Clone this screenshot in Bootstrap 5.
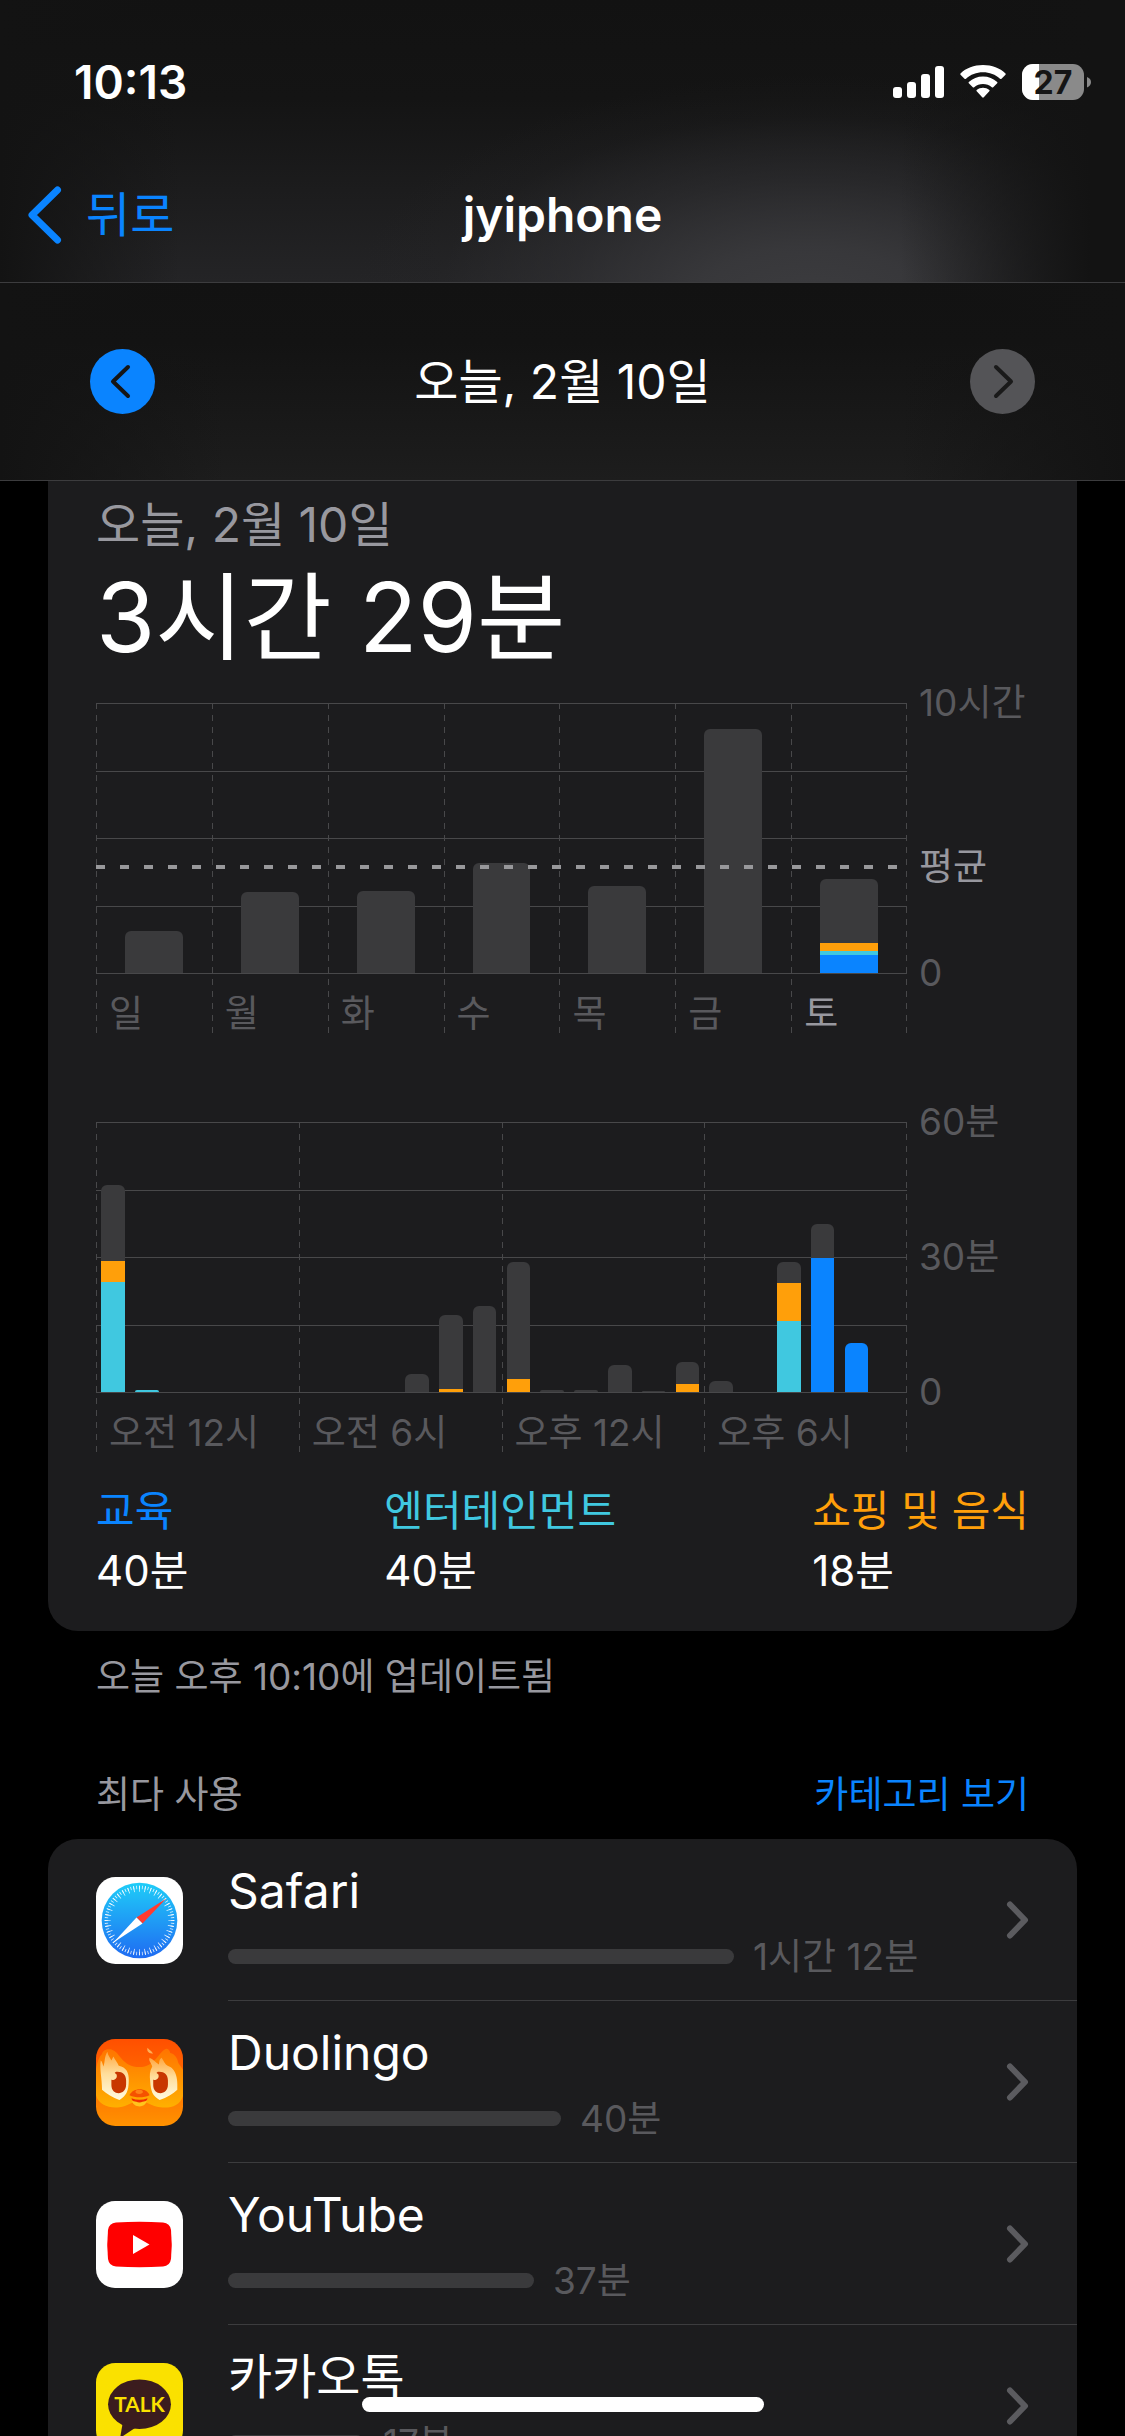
<!DOCTYPE html>
<html lang="ko" data-bs-theme="dark">
<head>
<meta charset="utf-8">
<meta name="viewport" content="width=device-width, initial-scale=1">
<title>스크린 타임</title>
<link href="https://cdn.jsdelivr.net/npm/bootstrap@5.3.0/dist/css/bootstrap.min.css" rel="stylesheet">
<style>
:root{--ios-blue:#0a84ff;--ios-teal:#40c8e0;--ios-orange:#ff9f0a;--surface:#1c1c1e;--fill:#3a3a3c;--line:#48484a;--dim:#59595d;--muted:#98989f}
body{background:#000;color:#fff;font-family:Inter,"Noto Sans CJK KR",sans-serif;font-size:48px;line-height:56px}
a,button{text-decoration:none}
.top-nav{background:
  linear-gradient(90deg,#131313 0,transparent 16%,transparent 80%,rgba(19,19,19,.6) 90%,#131313 97%),
  radial-gradient(ellipse 460px 230px at 72% 108%,#3c3c3f 0,rgba(58,58,61,.9) 25%,rgba(50,50,53,.55) 55%,rgba(40,40,42,.15) 82%,rgba(36,36,38,0) 100%),
  linear-gradient(#121212 0,#141414 35%,#242426 100%);border-bottom:1px solid #3c3c3e}
.status-row{height:148px;padding:16px 34px 0 74px}
.clock{font-size:46px;font-weight:600}
.battery-text{font:700 32px Inter,sans-serif}
.title-row{height:134px;padding:0 28px}
.side-slot{flex:1 1 0}
.screen-title{font-size:48px;font-weight:600}
.back-link,.accent-link{color:var(--ios-blue)}
.day-nav{height:198px;padding:0 90px;background:linear-gradient(90deg,#131313 0,transparent 20%,transparent 80%,#131313 100%),linear-gradient(#121212 0,#131313 30%,#1d1d1d 100%);border-bottom:1px solid #3c3c3e}
.round-btn{width:65px;height:65px;border:0;background:var(--ios-blue)}
.round-btn:disabled{background:#545457}
.page-pad{padding-left:48px;padding-right:48px}
.panel{background:var(--surface);border-radius:30px}
.panel-open{border-top-left-radius:0;border-top-right-radius:0;padding:16px 48px 30px}
.sub-label{color:var(--muted)}
.total-time{font-size:96px;line-height:128px;margin-bottom:22px}
.chart-area{height:330px}
.chart-area::after,.tick-col::before{content:"";position:absolute;top:0;bottom:0;left:0;width:1px;background:repeating-linear-gradient(var(--line) 0 6px,transparent 6px 12px)}
.chart-area::after{left:auto;right:0}
.gridlines{height:271px}
.gridlines span{height:1px;background:var(--line)}
.tick-col{flex:1 1 0;position:relative}
.plot{height:270px}
.tick-label{height:60px;padding:21px 0 0 13px;font-size:37px;line-height:40px;color:var(--dim);white-space:nowrap}
.tick-label.today{color:var(--muted)}
.stack-bar{height:100%;width:50%}
.hour .stack-bar{width:70%}
.hour{flex:1 1 0}
.seg{background:var(--fill)}
.seg:first-child{border-radius:6px 6px 0 0}
.seg.edu{background:var(--ios-blue)}
.seg.ent{background:var(--ios-teal)}
.seg.shop{background:var(--ios-orange)}
.avg-line{height:4px;background:repeating-linear-gradient(90deg,#98989b 0 9px,transparent 9px 24px);transform:translateY(-50%)}
.y-axis{width:122px;height:270px}
.y-axis span{left:12px;font-size:37px;line-height:40px;color:var(--dim);transform:translateY(-50%);white-space:nowrap}
.y-axis span.avg{color:var(--muted)}
.chart-gap{margin-top:89px}
.legend-row{margin-top:29px;font-size:42px;line-height:60px}
.c-edu{color:var(--ios-blue)}.c-ent{color:var(--ios-teal)}.c-shop{color:var(--ios-orange)}
.note-row{padding:18px 48px 0;font-size:37px;color:var(--muted)}
.section-row{padding:62px 48px 16px;font-size:37px}
.section-title{font-size:37px;line-height:56px}
.app-row{height:162px;padding-left:48px;color:#fff}
.app-icon{width:87px;height:87px;margin-right:45px}
.app-body{border-bottom:1px solid #3c3c3e;padding-right:48px}
.app-name{line-height:60px;margin-bottom:14px}
.use-row{line-height:44px;font-size:37px;color:var(--dim);gap:19px}
.use-bar{height:15px;border-radius:8px;background:var(--fill)}
.home-bar{bottom:24px;width:402px;height:15px;border-radius:8px;background:#fff}
</style>
<script src="https://cdn.jsdelivr.net/npm/bootstrap@5.3.0/dist/js/bootstrap.bundle.min.js"></script>
</head>
<body class="vh-100 overflow-hidden">
<header>
  <div class="top-nav">
    <div class="status-row d-flex align-items-center justify-content-between">
      <span class="clock">10:13</span>
      <svg width="198" height="36" viewBox="0 0 198 36" fill="#fff" role="img" aria-label="신호, Wi-Fi, 배터리 27%">
        <rect x="0" y="23" width="9" height="11" rx="3"/><rect x="14" y="18" width="9" height="16" rx="3"/><rect x="28" y="10" width="9" height="24" rx="3"/><rect x="42" y="2" width="9" height="32" rx="3"/>
        <path d="M90 1C81 1 73 4 67.500 9.500Q67 10 67.500 10.700L71.500 14.700Q72.200 15.300 73 14.700C77.500 10.500 83.500 8.300 90 8.300S102.500 10.500 107 14.700Q107.800 15.300 108.500 14.700L112.500 10.700Q113 10 112.500 9.500C107 4 99 1 90 1ZM90 12.500C84.500 12.500 79.700 14.500 75.800 18Q75.200 18.700 75.800 19.300L79.800 23.200Q80.500 23.800 81.200 23.200C83.700 21 86.700 20 90 20S96.300 21 98.800 23.200Q99.500 23.800 100.200 23.200L104.200 19.300Q104.800 18.700 104.200 18C100.300 14.500 95.500 12.500 90 12.500ZM90 23.800C87.700 23.800 85.500 24.600 83.700 26Q83 26.600 83.700 27.300L89.200 33.300Q90 34 90.800 33.300L96.300 27.300Q97 26.600 96.300 26C94.500 24.600 92.300 23.800 90 23.800Z"/>
        <clipPath id="cell"><rect x="129" y="0" width="62" height="36" rx="11"/></clipPath>
        <g clip-path="url(#cell)"><rect x="129" width="62" height="36" fill="#8a8a8a"/><rect x="129" width="17" height="36"/></g>
        <path d="M194 13Q198 14.500 198 18T194 23.500Z" fill="#8a8a8a"/>
        <text x="160" y="30" text-anchor="middle" fill="#151515" class="battery-text">27</text>
      </svg>
    </div>
    <nav class="title-row d-flex align-items-center">
      <div class="side-slot d-flex"><a href="#" class="back-link d-flex align-items-center gap-4">
        <svg width="34" height="58" viewBox="0 0 34 58" fill="none" stroke="currentColor" stroke-width="7" stroke-linecap="round" stroke-linejoin="round" aria-hidden="true"><path d="M29.500 4L4 29L29.500 54"/></svg><span>뒤로</span></a></div>
      <h1 class="screen-title m-0">jyiphone</h1>
      <div class="side-slot"></div>
    </nav>
  </div>
  <div class="day-nav d-flex align-items-center justify-content-between">
    <button type="button" class="round-btn rounded-circle p-0 d-flex align-items-center justify-content-center" aria-label="이전 날">
      <svg width="65" height="65" viewBox="0 0 65 65" fill="none" stroke="#151515" stroke-width="4" stroke-linecap="round" stroke-linejoin="round"><path d="M38 18L23 32.500L38 47"/></svg></button>
    <span>오늘, 2월 10일</span>
    <button type="button" disabled class="round-btn rounded-circle p-0 d-flex align-items-center justify-content-center" aria-label="다음 날">
      <svg width="65" height="65" viewBox="0 0 65 65" fill="none" stroke="#1a1a1a" stroke-width="4" stroke-linecap="round" stroke-linejoin="round"><path d="M26 18L41 32.500L26 47"/></svg></button>
  </div>
</header>

<main class="page-pad">
  <section class="panel panel-open">
    <div class="sub-label">오늘, 2월 10일</div>
    <div class="total-time">3시간 29분</div>

    <div class="d-flex">
      <div class="chart-area position-relative d-flex flex-grow-1">
        <div class="gridlines position-absolute top-0 start-0 end-0 d-flex flex-column justify-content-between"><span></span><span></span><span></span><span></span><span></span></div>
        <div class="tick-col"><div class="plot"><div class="stack-bar d-flex flex-column justify-content-end mx-auto"><div class="seg" style="height:15.6%"></div></div></div><div class="tick-label">일</div></div>
        <div class="tick-col"><div class="plot"><div class="stack-bar d-flex flex-column justify-content-end mx-auto"><div class="seg" style="height:30%"></div></div></div><div class="tick-label">월</div></div>
        <div class="tick-col"><div class="plot"><div class="stack-bar d-flex flex-column justify-content-end mx-auto"><div class="seg" style="height:30.4%"></div></div></div><div class="tick-label">화</div></div>
        <div class="tick-col"><div class="plot"><div class="stack-bar d-flex flex-column justify-content-end mx-auto"><div class="seg" style="height:40.8%"></div></div></div><div class="tick-label">수</div></div>
        <div class="tick-col"><div class="plot"><div class="stack-bar d-flex flex-column justify-content-end mx-auto"><div class="seg" style="height:32.2%"></div></div></div><div class="tick-label">목</div></div>
        <div class="tick-col"><div class="plot"><div class="stack-bar d-flex flex-column justify-content-end mx-auto"><div class="seg" style="height:90.4%"></div></div></div><div class="tick-label">금</div></div>
        <div class="tick-col"><div class="plot"><div class="stack-bar d-flex flex-column justify-content-end mx-auto"><div class="seg" style="height:23.7%"></div><div class="seg shop" style="height:3%"></div><div class="seg ent" style="height:1.5%"></div><div class="seg edu" style="height:6.7%"></div></div></div><div class="tick-label today">토</div></div>
        <div class="plot position-absolute top-0 start-0 end-0"><div class="avg-line position-absolute start-0 end-0" style="top:60.9%"></div></div>
      </div>
      <div class="y-axis position-relative"><span class="position-absolute" style="top:0%">10시간</span><span class="position-absolute avg" style="top:60.9%">평균</span><span class="position-absolute" style="top:100%">0</span></div>
    </div>

    <div class="d-flex chart-gap">
      <div class="chart-area position-relative d-flex flex-grow-1">
        <div class="gridlines position-absolute top-0 start-0 end-0 d-flex flex-column justify-content-between"><span></span><span></span><span></span><span></span><span></span></div>
        <div class="tick-col"><div class="plot d-flex">
          <div class="hour"><div class="stack-bar d-flex flex-column justify-content-end mx-auto"><div class="seg" style="height:28.1%"></div><div class="seg shop" style="height:7.8%"></div><div class="seg ent" style="height:40.8%"></div></div></div>
          <div class="hour"><div class="stack-bar d-flex flex-column justify-content-end mx-auto"><div class="seg ent" style="height:.8%"></div></div></div>
          <div class="hour"></div><div class="hour"></div><div class="hour"></div><div class="hour"></div>
        </div><div class="tick-label">오전 12시</div></div>
        <div class="tick-col"><div class="plot d-flex">
          <div class="hour"></div><div class="hour"></div><div class="hour"></div>
          <div class="hour"><div class="stack-bar d-flex flex-column justify-content-end mx-auto"><div class="seg" style="height:6.7%"></div></div></div>
          <div class="hour"><div class="stack-bar d-flex flex-column justify-content-end mx-auto"><div class="seg" style="height:27.4%"></div><div class="seg shop" style="height:1.2%"></div></div></div>
          <div class="hour"><div class="stack-bar d-flex flex-column justify-content-end mx-auto"><div class="seg" style="height:31.9%"></div></div></div>
        </div><div class="tick-label">오전 6시</div></div>
        <div class="tick-col"><div class="plot d-flex">
          <div class="hour"><div class="stack-bar d-flex flex-column justify-content-end mx-auto"><div class="seg" style="height:43.3%"></div><div class="seg shop" style="height:4.9%"></div></div></div>
          <div class="hour"><div class="stack-bar d-flex flex-column justify-content-end mx-auto"><div class="seg" style="height:.8%"></div></div></div>
          <div class="hour"><div class="stack-bar d-flex flex-column justify-content-end mx-auto"><div class="seg" style="height:.8%"></div></div></div>
          <div class="hour"><div class="stack-bar d-flex flex-column justify-content-end mx-auto"><div class="seg" style="height:10%"></div></div></div>
          <div class="hour"><div class="stack-bar d-flex flex-column justify-content-end mx-auto"><div class="seg" style="height:.4%"></div></div></div>
          <div class="hour"><div class="stack-bar d-flex flex-column justify-content-end mx-auto"><div class="seg" style="height:8.1%"></div><div class="seg shop" style="height:3%"></div></div></div>
        </div><div class="tick-label">오후 12시</div></div>
        <div class="tick-col"><div class="plot d-flex">
          <div class="hour"><div class="stack-bar d-flex flex-column justify-content-end mx-auto"><div class="seg" style="height:4.1%"></div></div></div>
          <div class="hour"></div>
          <div class="hour"><div class="stack-bar d-flex flex-column justify-content-end mx-auto"><div class="seg" style="height:7.8%"></div><div class="seg shop" style="height:14.1%"></div><div class="seg ent" style="height:26.3%"></div></div></div>
          <div class="hour"><div class="stack-bar d-flex flex-column justify-content-end mx-auto"><div class="seg" style="height:12.6%"></div><div class="seg edu" style="height:49.8%"></div></div></div>
          <div class="hour"><div class="stack-bar d-flex flex-column justify-content-end mx-auto"><div class="seg edu" style="height:18.2%"></div></div></div>
          <div class="hour"></div>
        </div><div class="tick-label">오후 6시</div></div>
      </div>
      <div class="y-axis position-relative"><span class="position-absolute" style="top:0%">60분</span><span class="position-absolute" style="top:50%">30분</span><span class="position-absolute" style="top:100%">0</span></div>
    </div>

    <div class="legend-row d-flex justify-content-between">
      <div><div class="c-edu">교육</div><div>40분</div></div>
      <div><div class="c-ent">엔터테인먼트</div><div>40분</div></div>
      <div><div class="c-shop">쇼핑 및 음식</div><div>18분</div></div>
    </div>
  </section>

  <p class="note-row m-0">오늘 오후 10:10에 업데이트됨</p>
  <div class="section-row d-flex justify-content-between">
    <h2 class="section-title sub-label m-0 fw-normal">최다 사용</h2>
    <a href="#" class="accent-link">카테고리 보기</a>
  </div>

  <section class="panel">
    <a href="#" class="app-row d-flex align-items-center">
      <svg class="app-icon flex-shrink-0" viewBox="0 0 260 260" aria-hidden="true">
        <defs><linearGradient id="sky" x2="0" y2="1"><stop stop-color="#1fcdf8"/><stop offset="1" stop-color="#1f6bf2"/></linearGradient></defs>
        <rect width="260" height="260" rx="58" fill="#fff"/><circle cx="130" cy="130" r="113" fill="url(#sky)"/>
        <g fill="none" stroke="#fff" stroke-opacity=".85"><circle cx="130" cy="130" r="99" stroke-width="10" pathLength="72" stroke-dasharray=".28 .72" stroke-dashoffset=".14"/><circle cx="130" cy="130" r="95" stroke-width="18" pathLength="36" stroke-dasharray=".15 .85" stroke-dashoffset=".075"/></g>
        <path d="M210 64L121 121L139 139Z" fill="#ff3b30"/><path d="M52 196L121 121L139 139Z" fill="#fff"/>
      </svg>
      <div class="app-body flex-grow-1 h-100 d-flex align-items-center">
        <div class="flex-grow-1"><div class="app-name">Safari</div><div class="use-row d-flex align-items-center"><div class="use-bar" style="width:506px"></div><span>1시간 12분</span></div></div>
        <svg width="24" height="40" viewBox="0 0 24 40" fill="none" stroke="#5b5b5f" stroke-width="6" stroke-linecap="round" stroke-linejoin="round"><path d="M5 4.500L20 20L5 35.500"/></svg>
      </div>
    </a>
    <a href="#" class="app-row d-flex align-items-center">
      <svg class="app-icon flex-shrink-0" viewBox="0 0 260 260" aria-hidden="true">
        <defs>
          <linearGradient id="ember" x2="0" y2="1"><stop stop-color="#ff4f00"/><stop offset=".35" stop-color="#ff6400"/><stop offset="1" stop-color="#ff9200"/></linearGradient>
          <linearGradient id="face" x2="0" y2="1"><stop stop-color="#ff7400"/><stop offset="1" stop-color="#ffb000"/></linearGradient>
          <linearGradient id="flame" x2="0" y2="1"><stop stop-color="#ffa640"/><stop offset=".45" stop-color="#ffdd9a"/><stop offset="1" stop-color="#fffbe0"/></linearGradient>
          <clipPath id="tile"><rect width="260" height="260" rx="58"/></clipPath>
        </defs>
        <g clip-path="url(#tile)">
          <rect width="260" height="260" fill="url(#ember)"/>
          <path d="M0 90C4 70 8 55 18 45C20 35 32 28 48 32C72 40 78 84 130 84C176 84 186 40 208 30C215 26 220 34 222 42C236 44 244 60 246 72L260 92V170C250 200 222 208 192 204C165 202 155 186 130 186S95 202 70 204C38 208 8 196 0 168Z" fill="url(#face)"/>
          <path d="M18 152C18 120 10 86 14 64C18 66 20 74 22 82C28 68 24 54 34 38C36 50 42 56 46 64L52 52C56 62 64 68 68 80C90 84 99 100 98 124C97 156 92 168 70 182C50 176 32 164 18 152Z" fill="url(#flame)"/>
          <path d="M243 152C246 104 232 86 214 80C206 76 204 68 196 56C188 62 190 68 188 76C178 70 170 60 160 56C156 66 166 72 168 82C160 96 160 110 162 126C164 156 168 168 190 182C212 176 230 164 243 152Z" fill="url(#flame)"/>
          <path d="M154 26C152 34 154 38 160 42L170 44C168 36 160 34 154 26Z" fill="#ffad55"/>
          <g fill="#c83700"><path d="M60 98C78 96 90 106 90 124V136C90 170 46 170 46 138V122C54 124 64 118 62 108C62 104 56 104 56 101Z"/><path d="M185 98C203 96 215 106 215 124V136C215 170 171 170 171 138V122C179 124 189 118 187 108C187 104 181 104 181 101Z"/></g>
          <path d="M108 186C112 206 148 208 152 184Z" fill="#ffc51c"/>
          <path d="M100 168C110 144 152 144 160 168C142 176 118 176 100 168Z" fill="#f55200"/><ellipse cx="129" cy="158" rx="11" ry="6" fill="#ff8217"/>
          <path d="M106 177Q130 186 154 177C152 188 144 186 130 190C116 186 108 188 106 177Z" fill="#f02f00"/>
        </g>
      </svg>
      <div class="app-body flex-grow-1 h-100 d-flex align-items-center">
        <div class="flex-grow-1"><div class="app-name">Duolingo</div><div class="use-row d-flex align-items-center"><div class="use-bar" style="width:333px"></div><span>40분</span></div></div>
        <svg width="24" height="40" viewBox="0 0 24 40" fill="none" stroke="#5b5b5f" stroke-width="6" stroke-linecap="round" stroke-linejoin="round"><path d="M5 4.500L20 20L5 35.500"/></svg>
      </div>
    </a>
    <a href="#" class="app-row d-flex align-items-center">
      <svg class="app-icon flex-shrink-0" viewBox="0 0 87 87" aria-hidden="true">
        <rect width="87" height="87" rx="19" fill="#fff"/><path d="M20 21.500Q43.500 20 67 21.500Q74 22 75 29Q76.500 43.500 75 58Q74 65 67 65.500Q43.500 67 20 65.500Q13 65 12 58Q10.500 43.500 12 29Q13 22 20 21.500Z" fill="red"/><path d="M37 34V53L53.500 43.500Z" fill="#fff"/>
      </svg>
      <div class="app-body flex-grow-1 h-100 d-flex align-items-center">
        <div class="flex-grow-1"><div class="app-name">YouTube</div><div class="use-row d-flex align-items-center"><div class="use-bar" style="width:306px"></div><span>37분</span></div></div>
        <svg width="24" height="40" viewBox="0 0 24 40" fill="none" stroke="#5b5b5f" stroke-width="6" stroke-linecap="round" stroke-linejoin="round"><path d="M5 4.500L20 20L5 35.500"/></svg>
      </div>
    </a>
    <a href="#" class="app-row d-flex align-items-center">
      <svg class="app-icon flex-shrink-0" viewBox="0 0 260 260" aria-hidden="true">
        <rect width="260" height="260" rx="58" fill="#fae100"/><ellipse cx="130" cy="123" rx="94" ry="74" fill="#3b1c1e"/><path d="M80 178L72 224L120 192Z" fill="#3b1c1e"/>
        <text x="130" y="147" text-anchor="middle" font-family="Lato,sans-serif" font-weight="700" font-size="62" fill="#fae100">TALK</text>
      </svg>
      <div class="app-body flex-grow-1 h-100 d-flex align-items-center">
        <div class="flex-grow-1"><div class="app-name">카카오톡</div><div class="use-row d-flex align-items-center"><div class="use-bar" style="width:136px"></div><span>17분</span></div></div>
        <svg width="24" height="40" viewBox="0 0 24 40" fill="none" stroke="#5b5b5f" stroke-width="6" stroke-linecap="round" stroke-linejoin="round"><path d="M5 4.500L20 20L5 35.500"/></svg>
      </div>
    </a>
  </section>
</main>
<div class="home-bar position-fixed start-50 translate-middle-x"></div>
</body>
</html>
